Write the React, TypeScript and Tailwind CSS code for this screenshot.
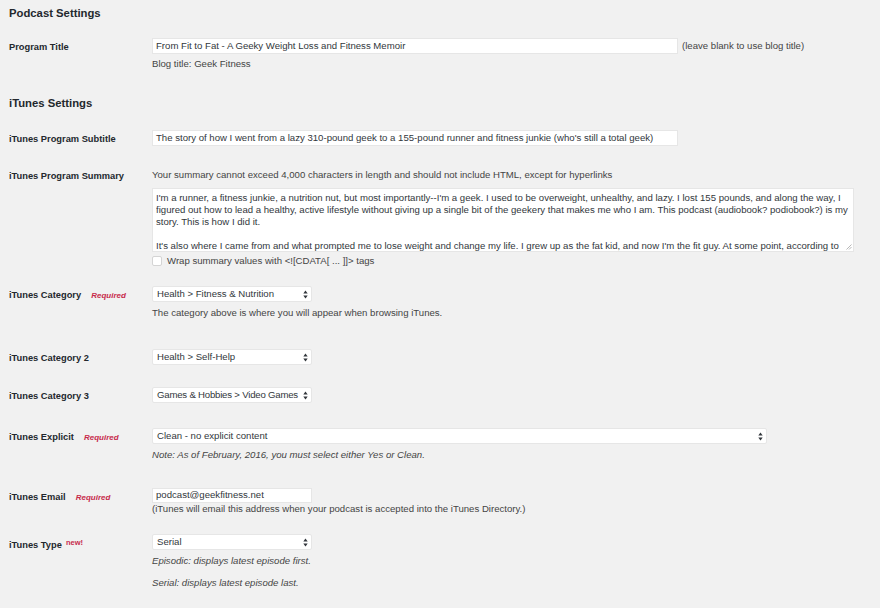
import React from "react";

const font = { fontFamily: '"Liberation Sans", Arial, sans-serif' };

function Arrows() {
  return (
    <svg width="5" height="9" viewBox="0 0 5 9" className="shrink-0">
      <path d="M2.5 0.5 L4.7 3.6 H0.3 Z" fill="#32373c" />
      <path d="M2.5 8.5 L4.7 5.4 H0.3 Z" fill="#32373c" />
    </svg>
  );
}

function Select({ value, w, tight = false }: { value: string; w: string; tight?: boolean }) {
  return (
    <div
      className={`${w} h-[16px] bg-white border border-[#e6e6e6] rounded-[2px] flex items-center justify-between gap-[2px] pl-[4px] pr-[3px] text-[9.6px] text-[#32373c]`}
    >
      <span className={`whitespace-nowrap ${tight ? "tracking-[-0.2px]" : ""}`}>{value}</span>
      <Arrows />
    </div>
  );
}

function Input({ value, w, h = "h-[16px]" }: { value: string; w: string; h?: string }) {
  return (
    <div
      className={`${w} ${h} bg-white border border-[#e6e6e6] flex items-center pl-[3px] text-[9.6px] text-[#32373c] whitespace-nowrap overflow-hidden`}
    >
      {value}
    </div>
  );
}

function Required() {
  return <span className="ml-[10px] text-[8px] italic font-bold text-[#c72a4b]">Required</span>;
}

function Label({ children, pt }: { children: React.ReactNode; pt: string }) {
  return (
    <div className={`w-[143px] shrink-0 ${pt} text-[9.3px] leading-[12px] font-bold text-[#23282d] whitespace-nowrap`}>
      {children}
    </div>
  );
}

const note = "text-[9.6px] leading-[12px] text-[#444]";

const summary = [
  "I'm a runner, a fitness junkie, a nutrition nut, but most importantly--I'm a geek. I used to be overweight, unhealthy, and lazy. I lost 155 pounds, and along the way, I",
  "figured out how to lead a healthy, active lifestyle without giving up a single bit of the geekery that makes me who I am. This podcast (audiobook? podiobook?) is my",
  "story. This is how I did it.",
  "",
  "It's also where I came from and what prompted me to lose weight and change my life. I grew up as the fat kid, and now I'm the fit guy. At some point, according to",
];

export default function App() {
  return (
    <div className="min-h-[608px] bg-[#f1f1f1] px-[9px] pt-[6px] pb-[20px]" style={font}>
      <h2 className="text-[11.3px] leading-[14px] font-bold text-[#23282d]">Podcast Settings</h2>

      {/* Program title */}
      <div className="flex mt-[18px]">
        <Label pt="pt-[3px]">Program Title</Label>
        <div>
          <div className="flex items-center">
            <Input value="From Fit to Fat - A Geeky Weight Loss and Fitness Memoir" w="w-[526px]" />
            <span className="ml-[4px] text-[9.6px] text-[#444] whitespace-nowrap">(leave blank to use blog title)</span>
          </div>
          <div className={`mt-[4px] ${note}`}>Blog title: Geek Fitness</div>
        </div>
      </div>

      <h2 className="mt-[26px] text-[11.3px] leading-[14px] font-bold text-[#23282d]">iTunes Settings</h2>

      {/* Subtitle */}
      <div className="flex mt-[20px]">
        <Label pt="pt-[3px]">iTunes Program Subtitle</Label>
        <Input
          value="The story of how I went from a lazy 310-pound geek to a 155-pound runner and fitness junkie (who's still a total geek)"
          w="w-[526px]"
        />
      </div>

      {/* Summary */}
      <div className="flex mt-[23px]">
        <Label pt="pt-[1px]">iTunes Program Summary</Label>
        <div>
          <div className={note}>
            Your summary cannot exceed 4,000 characters in length and should not include HTML, except for hyperlinks
          </div>
          <div className="relative mt-[7px] w-[702px] h-[64px] bg-white border border-[#e6e6e6] px-[3px] pt-[3px] overflow-hidden text-[9.6px] leading-[12px] text-[#32373c]">
            {summary.map((l, i) => (
              <div key={i} className="h-[12px] whitespace-nowrap overflow-hidden">
                {l}
              </div>
            ))}
            <svg width="6" height="6" viewBox="0 0 6 6" className="absolute right-[1px] bottom-[1px]">
              <path d="M5.5 0.5 L0.5 5.5 M5.5 3 L3 5.5" stroke="#999" strokeWidth="0.7" />
            </svg>
          </div>
          <div className="mt-[3px] flex items-center h-[12px]">
            <div className="w-[10px] h-[10px] bg-white border border-[#d4d4d4] rounded-[2px]" />
            <span className="ml-[5px] text-[9.6px] text-[#444]">Wrap summary values with &lt;![CDATA[ ... ]]&gt; tags</span>
          </div>
        </div>
      </div>

      {/* Category */}
      <div className="flex mt-[19px]">
        <Label pt="pt-[3px]">
          iTunes Category
          <Required />
        </Label>
        <div>
          <Select value="Health > Fitness & Nutrition" w="w-[160px]" />
          <div className={`mt-[5px] ${note}`}>The category above is where you will appear when browsing iTunes.</div>
        </div>
      </div>

      <div className="flex mt-[30px]">
        <Label pt="pt-[3px]">iTunes Category 2</Label>
        <Select value="Health > Self-Help" w="w-[160px]" />
      </div>

      <div className="flex mt-[22px]">
        <Label pt="pt-[3px]">iTunes Category 3</Label>
        <Select value="Games & Hobbies > Video Games" w="w-[160px]" tight />
      </div>

      {/* Explicit */}
      <div className="flex mt-[25px]">
        <Label pt="pt-[3px]">
          iTunes Explicit
          <Required />
        </Label>
        <div>
          <Select value="Clean - no explicit content" w="w-[615px]" />
          <div className={`mt-[5px] italic ${note}`}>Note: As of February, 2016, you must select either Yes or Clean.</div>
        </div>
      </div>

      {/* Email */}
      <div className="flex mt-[27px]">
        <Label pt="pt-[3px]">
          iTunes Email
          <Required />
        </Label>
        <div>
          <Input value="podcast@geekfitness.net" w="w-[160px]" h="h-[15px]" />
          <div className={note}>(iTunes will email this address when your podcast is accepted into the iTunes Directory.)</div>
        </div>
      </div>

      {/* Type */}
      <div className="flex mt-[19px]">
        <Label pt="pt-[5px]">
          iTunes Type
          <sup className="ml-[4px] text-[7.5px] font-bold text-[#c72a4b] relative -top-[3px]">new!</sup>
        </Label>
        <div>
          <Select value="Serial" w="w-[160px]" />
          <div className={`mt-[5px] italic ${note}`}>Episodic: displays latest episode first.</div>
          <div className={`mt-[10px] italic ${note}`}>Serial: displays latest episode last.</div>
        </div>
      </div>
    </div>
  );
}
